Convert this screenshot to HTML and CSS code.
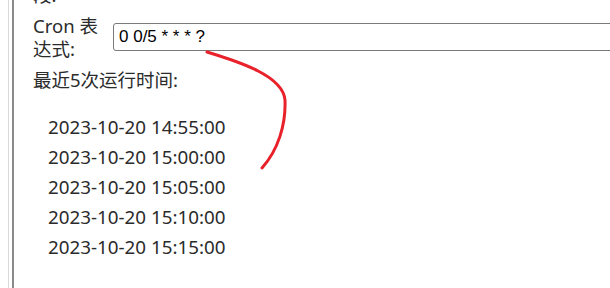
FILE: index.html
```html
<!DOCTYPE html>
<html lang="zh-CN">
<head>
    <meta charset="UTF-8">
    <title>Cron 表达式</title>
    <link rel="stylesheet" href="styles.css">
</head>
<body>
    <div class="outer">
        <div class="panel">
            <div class="row top-row">段:</div>
            <div class="row cron-row">
                <label for="cron" class="cron-label">Cron 表达式:</label>
                <input type="text" id="cron" class="cron-input" value="0 0/5 * * * ?">
            </div>
            <div class="row">最近5次运行时间:</div>
            <ul class="run-list">
                <li>2023-10-20 14:55:00</li>
                <li>2023-10-20 15:00:00</li>
                <li>2023-10-20 15:05:00</li>
                <li>2023-10-20 15:10:00</li>
                <li>2023-10-20 15:15:00</li>
            </ul>
        </div>
    </div>

    <svg class="scribble" width="610" height="288" viewBox="0 0 610 288">
        <path d="M207 52 C 240 62, 283 76, 285 100 C 286 125, 278 150, 262 168" fill="none" stroke="#e8212b" stroke-width="3" stroke-linecap="round"/>
    </svg>
</body>
</html>
```

FILE: styles.css
```css
body {
    margin: 0;
    background-color: #fff;
    color: #2b2b2b;
    font-family: "Noto Sans", "Noto Sans CJK SC", sans-serif;
    font-size: 18.5px;
    height: 288px;
    overflow: hidden;
}
.outer {
    margin-left: 8px;
    border-left: 1px solid #d8d8d8;
    height: 100%;
}
.panel {
    display: flow-root;
    margin-left: 3px;
    border-left: 2px solid #8a8a8a;
    padding-left: 19px;
    height: 100%;
}
.row {
    line-height: 22px;
}
.top-row {
    margin-top: -16px;
}
.cron-row {
    display: flex;
    align-items: flex-start;
    margin-top: 9px;
    line-height: 22.5px;
}
.cron-label {
    width: 70px;
    margin-right: 10px;
}
.cron-input {
    flex: 1;
    height: 28px;
    margin-top: 8px;
    margin-right: -4px;
    box-sizing: border-box;
    border: 1px solid #7a7a7a;
    border-radius: 3px;
    padding: 0 5px;
    font-family: "Liberation Sans", Arial, sans-serif;
    font-size: 17px;
    color: #000;
}
.cron-row + .row {
    margin-top: 9px;
}
.run-list {
    list-style: none;
    margin: 21px 0 0;
    padding-left: 15px;
    font-size: 18.8px;
}
.run-list li {
    line-height: 30px;
}
.scribble {
    position: absolute;
    left: 0;
    top: 0;
    pointer-events: none;
}
```
